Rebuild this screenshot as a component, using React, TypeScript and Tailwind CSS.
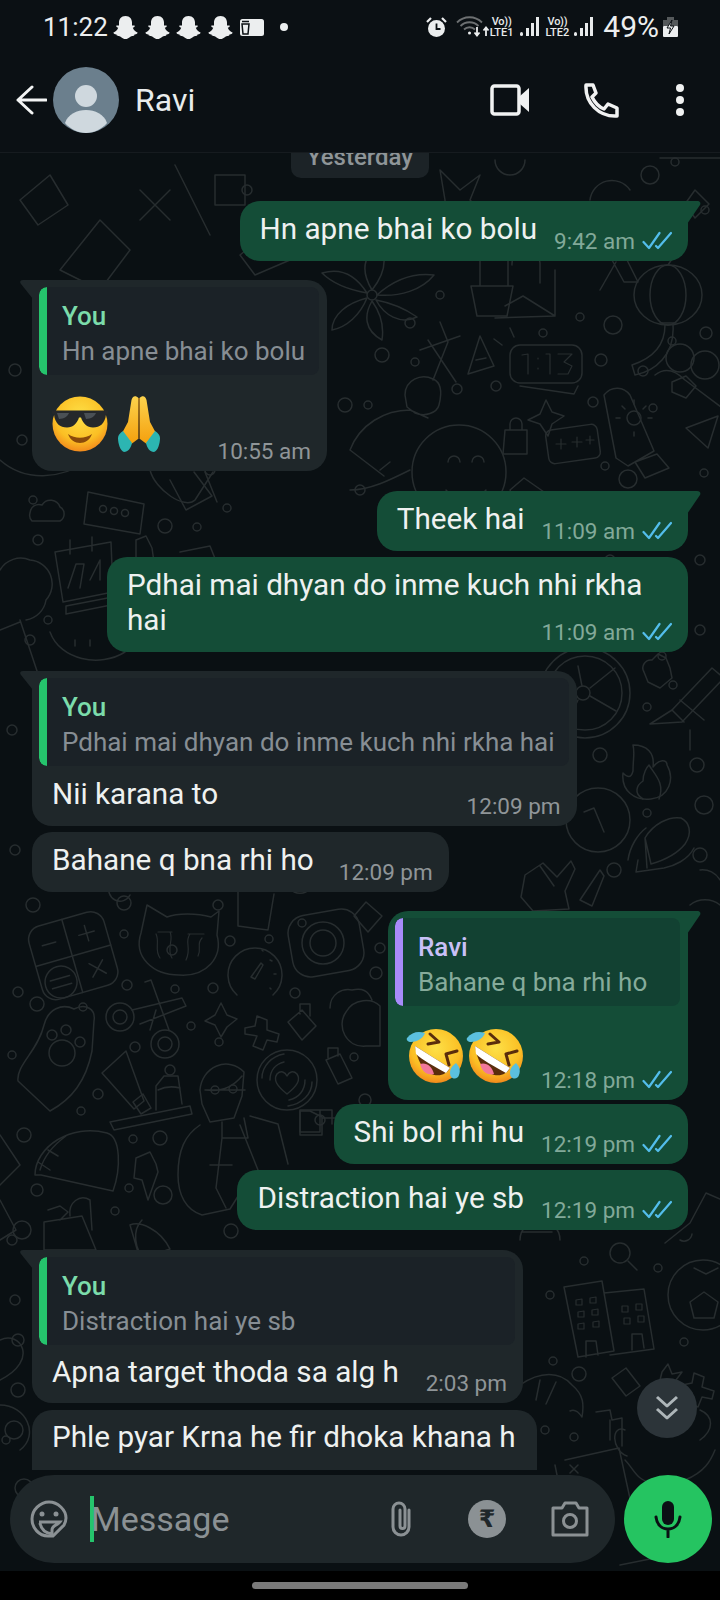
import type { ReactNode } from "react";

const dots: [number, number, number][] = [
  [33, 500, 4], [38, 540, 5], [30, 640, 5], [48, 620, 4], [165, 526, 7], [197, 527, 4], [227, 508, 4],
  [440, 295, 4], [410, 323, 5], [382, 355, 7], [415, 362, 4], [345, 405, 7], [368, 405, 4], [457, 389, 5],
  [496, 386, 5], [580, 317, 4], [613, 325, 9], [543, 333, 4], [601, 360, 6], [643, 371, 5], [706, 333, 6],
  [672, 341, 4], [653, 408, 4], [593, 402, 5], [605, 466, 4], [628, 479, 9], [704, 473, 4],
  [650, 175, 9], [675, 162, 4], [705, 210, 4], [680, 237, 4],
  [33, 905, 7], [124, 903, 7], [218, 905, 5], [124, 934, 4], [230, 941, 5], [269, 939, 4], [380, 948, 5],
  [376, 973, 6], [127, 985, 5], [175, 989, 4], [213, 988, 5], [295, 993, 5], [18, 992, 5], [37, 1004, 7],
  [83, 1007, 4], [191, 1026, 4], [135, 1047, 5], [219, 1042, 4], [170, 1070, 5], [12, 1055, 4], [98, 1094, 5],
  [81, 1111, 4], [24, 1135, 7], [133, 1139, 4], [160, 1138, 7], [129, 1188, 4], [163, 1195, 9],
  [37, 1190, 6], [115, 1211, 4], [22, 1230, 9], [231, 1231, 7], [320, 1120, 5], [354, 1057, 4], [365, 1100, 6],
  [600, 755, 7], [697, 765, 7], [704, 805, 9], [647, 813, 4], [614, 870, 7], [700, 855, 7], [662, 656, 4], [673, 685, 4], [647, 707, 4],
  [584, 1261, 4], [550, 1295, 4], [658, 1268, 4], [684, 1342, 4], [553, 1361, 4], [579, 1374, 7],
  [545, 1430, 4], [574, 1437, 4], [6, 1440, 4], [14, 1430, 9], [24, 1488, 9], [18, 1390, 7], [12, 1240, 5],
  [247, 190, 5], [40, 310, 5], [15, 370, 6], [22, 440, 5], [360, 490, 5], [700, 560, 5], [610, 560, 5], [700, 630, 5],
  [210, 470, 5], [12, 730, 5], [15, 850, 5], [18, 1340, 6], [15, 1300, 5],
];

// wallpaper doodles, placed in page coordinates
function Wallpaper() {
  return (
    <svg className="absolute inset-0 w-full h-full" viewBox="0 153 720 1418" fill="none" stroke="#272d2f" strokeWidth="1.5" strokeLinecap="round" strokeLinejoin="round">
      {dots.map(([x, y, r], i) => (
        <circle key={i} cx={x} cy={y} r={r} />
      ))}

      {/* top strip */}
      <path d="M20 200l30-25 18 30-30 20zM60 270l40-50 30 30-30 40zM140 190l30 30M140 220l30-30M175 165l35 70M215 175h30v30h-30zM240 255l30-25 20 30-35 15z" />
      <path d="M440 170l20 20 20-15-10 25 15 15-25-5-15 15 0-25zM495 160a15 15 0 0 0 30 0M590 200a22 22 0 0 1 40-10M660 158l60 0" />
      <path d="M695 190l14 14 -14 14 -10-14z" />

      {/* flower */}
      <g transform="translate(372 295)">
        <circle r="5" />
        <path d="M0-5C-12-25-8-40 8-50 16-35 12-20 0-5zM5 0C25-18 45-22 62-20 50-5 28 2 5 0zM4 5C20 8 35 15 45 22 28 30 12 20 4 5zM0 6C10 20 12 32 10 45-8 35-8 20 0 6zM-5 3C-12 20-25 32-40 35-40 20-25 8-5 3zM-5-2C-22-5-38-10-50-22-30-28-15-18-5-2z" />
      </g>
      {/* pot and cactus */}
      <path d="M471 286h42l-6 30h-30zM480 286v-30a14 14 0 0 1 28 0v30M505 306l18-10 32 20-60 2M512 265a14 14 0 0 1 28-2v20M555 270v45" />
      {/* lantern */}
      <g transform="translate(668 295)">
        <ellipse rx="34" ry="30" />
        <ellipse rx="18" ry="30" />
        <path d="M0-30l12-18M-8 28h16M-3 30c0 25-18 35-33 40l3 10c20-4 40-20 38-50" />
      </g>
      <path d="M612 260l12 22 14 0-12-24M600 290l16-28" />
      {/* translate */}
      <path d="M420 350l40-14M440 322l8 20-15 38M428 340l28 42M468 374l12-38 14 30zM476 360l10-2" />
      {/* clock */}
      <rect x="510" y="345" width="72" height="38" rx="10" />
      <path d="M520 386l54 8 4-8M502 345l-8-6M514 337l-4-9" />
      <path d="M522 355l6-1v20M538 358v1M538 368v1M546 354h4v20M558 354h14l-8 8 8 4-4 8h-10" strokeWidth="1.2" />
      {/* bearded person and smiley */}
      <path d="M405 395c0-15 16-22 28-16 10 4 8 18 6 26-2 8-14 12-24 8l-8-6zM350 450c10-26 35-40 60-40l18 8M350 450l34 26M380 470l10-8" />
      <circle cx="459" cy="472" r="47" />
      <path d="M448 462a6 6 0 0 1 12 0M472 462a6 6 0 0 1 12 0M446 490c10 14 30 14 40 0M410 470c-20 10-40 20-60 20" />
      {/* little things */}
      <path d="M546 400l6 12 12 4-12 8-4 12-8-12-12-4 12-6z" />
      <path d="M505 430h22v24h-24zM510 430v-6a6 6 0 0 1 12 0v6" />
      <rect x="547" y="427" width="52" height="34" rx="6" transform="rotate(-8 573 444)" />
      <path d="M556 444h10M561 439v10M572 442h10M577 437v10M586 440h8M590 436v8" strokeWidth="1.2" />
      <path d="M604 395c8-10 20-8 26 0l24 56-26 15-12-8zM635 462l22-8 12 14-24 10z" />
      <circle cx="634" cy="418" r="7" />
      <path d="M634 400v4M634 432v4M616 418h4M648 418h4M622 406l3 3M646 406l-3 3" />
      <path d="M686 428l32-12-10 32z" />
      <path d="M655 375c10-8 20-5 30 5l40 30M672 382l14-6 10 10-10 12-14-6z" />
      <circle cx="680" cy="358" r="14" />
      <circle cx="705" cy="365" r="14" />
      <path d="M510 490l14-12 20 14-8 16-20-4z" />

      {/* left column middle */}
      <path d="M30 513a9 9 0 0 1 12-8 10 10 0 0 1 18 2 8 8 0 0 1 0 14H32a8 8 0 0 1-2-8z" />
      <path d="M88 492l56 12-4 30-56-10z" />
      <circle cx="103" cy="509" r="3.5" /><circle cx="114" cy="511" r="3.5" /><circle cx="125" cy="513" r="3.5" />
      <path d="M55 552l56-10 2 50-50 10zM66 606l52-10-2 8-50 10zM70 540v14M92 537v14M68 588l8-24h8l-4 24M90 580l10-20v20" />
      <path d="M0 570a24 24 0 0 1 30-10 24 24 0 0 1 16 40 24 24 0 0 1-20 20M20 620l20 60M0 630l20-8" />
      <path d="M50 632c10 28 50 36 75 20l-10-20M75 640v6M90 640v6" />
      <path d="M136 540l10-4 6 12 2 14-18 6zM180 552l30-6 8 20M170 480l16 30 26-14-18-24M205 472l12 30" />
      <path d="M0 460c25 22 60 20 90 0M100 470c10-2 40-10 50-10M150 470c5 20 35 40 45 30l18-28" />

      {/* wheel, puzzle, pencil, flame, coin, corn */}
      <circle cx="585" cy="693" r="45" />
      <circle cx="585" cy="693" r="37" />
      <circle cx="583" cy="693" r="7" />
      <path d="M578 666l4 20M590 688l25-20M590 696l26 15M578 700l-12 25" />
      <path d="M644 672a8 8 0 0 1 8-12l6-6 8 4 4 10 2 10-12 10-12-6z" />
      <path d="M672 710l40-42 12 10-42 44-32 2zM672 710l12 12M680 700l24 20" />
      <path d="M633 745c14 0 22 8 20 22 6-8 14-8 14-2 8 14 2 32-16 34-16 2-30-8-28-26 4 4 8 6 10-2 0-12 2-18 0-26z" />
      <path d="M643 799c-10-6-6-14 0-18 0-8 4-14 6-16 6 10 16 18 10 34" />
      <circle cx="598" cy="820" r="32" />
      <path d="M584 812l10-4 10 24" />
      <path d="M645 838c8-14 24-22 36-20 8 4 12 14 4 26-8 10-20 16-34 20zM645 838l2 30M628 860c2-14 10-26 18-32M638 860l-2 12 28-4c10-2 24-8 30-20" />
      <path d="M525 875l18-12 14 14 14-16 4 8-10 22 4 18-36 2-12-14zM540 866l14 20" />
      <path d="M580 900l20-30 4 6-12 30z" />
      <path d="M690 730v20M700 870a20 20 0 0 1 20 10M690 905a24 24 0 0 1 30 0" />

      {/* calculator, cat, gauge, camera */}
      <g transform="rotate(-16 72 955)">
        <rect x="34" y="918" width="78" height="76" rx="14" />
        <path d="M72 918v76M34 956h78M46 938h14M84 938h16M92 930v16M86 968l14 14M100 968l-14 14" />
        <circle cx="54" cy="978" r="16" />
        <path d="M44 974h20M44 982h20" />
      </g>
      <path d="M147 905l20 12c10-4 30-4 44 0l8-6-2 24c6 22-10 42-38 40-26 0-46-18-38-42z" />
      <path d="M156 934c4 8-2 16 4 24M170 932c4 8-4 18 2 26M190 934c-6 8 2 14-4 26M202 938c-6 6 0 10-4 18M158 932h14M188 934h16" strokeWidth="1.2" />
      <circle cx="172" cy="950" r="5" />
      <path d="M237 995a27 27 0 1 1 36 0" />
      <path d="M251 977l10-14 2 2-8 14zM270 960l2 1M274 974h2M270 988l1 1M262 950l1 1" />
      <rect x="290" y="912" width="72" height="62" rx="18" transform="rotate(-10 326 943)" />
      <circle cx="323" cy="943" r="21" /><circle cx="323" cy="943" r="13" /><circle cx="302" cy="923" r="4" />
      <path d="M366 902l16 14-14 16-14-16z" />
      <path d="M330 1008c0-14 12-20 22-18 10-2 16 0 20 10M346 1012c8-14 26-14 34-6v40h-14c-20 2-30-20-20-34z" />
      <path d="M238 890v36l30 4 6-36M110 885a10 10 0 0 0 20 10M290 888a12 12 0 0 0 20 0" />

      {/* scissors */}
      <circle cx="120" cy="1017" r="14" /><circle cx="120" cy="1017" r="7" />
      <circle cx="165" cy="1044" r="14" /><circle cx="165" cy="1044" r="7" />
      <path d="M132 1010l50-12 4 8-46 18M145 982l6-2 18 50M150 1030l6-20" />
      <path d="M221 1003l6 12 10 4-10 8-6 10-6-12-10-4 10-6zM245 1028l10-2 2-10 10 4 0 10 12 4-2 8-10-2-4 10-10-4 4-10-12-2z" />
      <path d="M288 1022l14-12 14 16-14 14zM300 1014v-10h10v12M326 1060l14-6 12 24-14 6zM328 1058v-10h10v8" />
      <circle cx="287" cy="1080" r="30" />
      <path d="M287 1094c-10-8-14-14-10-20 4-4 8-2 10 2 2-4 6-6 10-2 4 6 0 12-10 20zM270 1080c0-10 6-16 14-18M305 1080c0 10-6 18-16 20M262 1078c0-12 10-22 22-24M312 1082c0 12-10 22-24 24" />
      <path d="M300 1135h22v-18l-12-6h-10zM322 1118h16" />

      {/* paw, tube, toothbrush */}
      <path d="M44 1025c4-16 18-22 30-16 12-6 22 0 20 12l-2 30c-6 30-20 48-42 60l-32-30c-2-16 20-30 26-56z" />
      <circle cx="62" cy="1053" r="13" /><circle cx="52" cy="1035" r="5" /><circle cx="66" cy="1030" r="5" /><circle cx="80" cy="1042" r="5" />
      <path d="M102 1073l24-22 18 50-10 8zM133 1102l10-8 8 14-10 6z" />
      <path d="M110 1122l80-16 2 8-78 16zM156 1110v-24l8-10h14l4 28M158 1090c8-4 14-4 22-2" />

      {/* glasses person */}
      <path d="M200 1090a26 28 0 0 1 44-18l-2 24-8 22-24 4-8-18zM206 1090c14 2 26-2 36-14M205 1090h40M222 1122v16h26l-4-20M200 1125c-15 10-22 25-22 50 0 20 8 35 24 40l28-6 10-16M222 1138l-6 50 10 20M250 1116l28 8 10 40M210 1165h22M240 1125l20 50" />
      <circle cx="215" cy="1090" r="4" /><circle cx="233" cy="1089" r="4" />
      <path d="M300 1110h20v22h-20zM320 1110h12v14" />

      {/* taco, bolt, bag, bread */}
      <path d="M35 1175c0-28 36-52 72-42 14 4 14 36 6 58l-72-16zM40 1170c4-14 12-24 26-34M38 1162l12 8M48 1150l10 6" />
      <path d="M136 1158l14-6 6 12 2 8-10 28-6-20-8-2z" />
      <path d="M44 1222l38-6 14 34-52 0zM48 1210l12-4 8 6-8 8M70 1216c-2-14 10-22 20-16l2 30" />
      <path d="M130 1225c10-4 30 4 40 24l-30 10zM142 1220c-10 10-8 30 4 40" />
      <path d="M0 1135l20 30-20 20M0 1200l16 30-16 10" />

      {/* right column bottom */}
      <circle cx="620" cy="1253" r="10" />
      <path d="M628 1261l9 9" />
      <path d="M564 1287l38-6 12 70-36 6zM604 1293l40-4 10 60-44 6M586 1357v-16h10l2 14M632 1350v-16h10l2 14" />
      <path d="M576 1300l6-1v6h-6zM590 1298l6-1v6h-6zM578 1312l6-1v6h-6zM592 1310l6-1v6h-6zM578 1324l6-1v6h-6zM593 1322l6-1v6h-6zM622 1306h6v6h-6zM636 1304h6v6h-6zM624 1318h6v6h-6zM638 1316h6v6h-6z" strokeWidth="1.2" />
      <circle cx="703" cy="1295" r="35" />
      <path d="M690 1302l14-10 14 10-4 16h-20zM694 1268l12 6 12-6" />
      <path d="M665 1243l25-20 16-30 14 6M680 1240a8 8 0 0 0 12-6M560 1240a16 16 0 0 0-40 0M522 1232h30" />
      <path d="M662 1372l6-8 4 10 10-2-6 8 6 8-10 0-4 8-6-8-8 0 6-8zM682 1385l10-2 2-10 10 4-2 10 12 4-2 8-10-2-4 10-10-4 4-10-12-2z" />
      <path d="M612 1378l14-10 14 18-14 10z" />
      <path d="M520 1385c20-14 40-14 52 0 12 10 12 20 10 32-4-6-8-8-12-6M540 1380l-4 20M556 1382l-10 22" />
      <path d="M596 1412l14-2 2 10 10-2v28M610 1420v20" />
      <path d="M625 1430c-14-6-14 20 2 26M700 1410c14 6 14 20 0 30M625 1460c10 10 10 20 30 24l30-4c20-8 26-20 30-30M660 1486l16 0" />
      <path d="M565 1460l54-12 20 92M555 1465l10 50 44 0M570 1465l8 8M578 1465l-8 8" />
      <path d="M0 1340c20-10 40 20 0 40M0 1405c26 0 40 30 20 45" />
      <path d="M520 1480l-14 14M620 1565l70-14" />
    </svg>
  );
}

function Ticks() {
  return (
    <svg width="30" height="20" viewBox="0 0 30 20" fill="none" stroke="#53bdeb" strokeWidth="2.2" strokeLinecap="round" strokeLinejoin="round" className="shrink-0">
      <path d="M1.500 11l5.500 6L17.500 2" />
      <path d="M14 15l2 2L29 2" />
    </svg>
  );
}

function Tail({ out }: { out: boolean }) {
  if (out) {
    return (
      <svg className="absolute top-0 -right-[13px]" width="14" height="24" viewBox="0 0 14 24">
        <path d="M0 0h10c3 0 4 2 3 4L0 23z" fill="#144d37" />
      </svg>
    );
  }
  return (
    <svg className="absolute top-0 -left-[12px]" width="13" height="20" viewBox="0 0 13 20">
      <path d="M13 0H3C0 0-.5 2 1 4l12 15z" fill="#1f272a" />
    </svg>
  );
}

function Time({ value, out }: { value: string; out?: boolean }) {
  return (
    <div className={`flex items-center gap-[7px] shrink-0 h-[24px] text-[22.500px] leading-[24px] ${out ? "text-[#82a999]" : "text-[#8f9598]"}`}>
      <span>{value}</span>
      {out && <Ticks />}
    </div>
  );
}

function Msg({ text, time, out, tail, className }: { text: string; time: string; out?: boolean; tail?: boolean; className: string }) {
  return (
    <div className={`relative flex items-end h-[60px] pl-[20px] pr-[16px] rounded-[20px] ${out ? "self-end gap-[17px] bg-[#144d37]" : "self-start gap-[25px] bg-[#1f272a]"} ${tail ? (out ? "rounded-tr-none" : "rounded-tl-none") : ""} ${className}`}>
      {tail && <Tail out={!!out} />}
      <span className="self-start pt-[11px] text-[29.700px] leading-[34px] text-[#eef1f0] whitespace-nowrap">{text}</span>
      <div className="mb-[8px]">
        <Time value={time} out={out} />
      </div>
    </div>
  );
}

function Quote({ name, text, out }: { name: string; text: string; out?: boolean }) {
  return (
    <div className={`flex h-[88px] rounded-[8px] overflow-hidden ${out ? "bg-[#124132]" : "bg-[#1b2227]"}`}>
      <div className={`w-[8px] shrink-0 rounded-l-[8px] ${out ? "bg-[#a78bfa]" : "bg-[#25c46c]"}`} />
      <div className="pl-[15px] pr-[14px] pt-[11px]">
        <div className={`text-[26px] leading-[36px] font-medium ${out ? "text-[#c9c0f7]" : "text-[#7bdcab]"}`}>{name}</div>
        <div className={`text-[26px] leading-[35px] whitespace-nowrap ${out ? "text-[#86ab9b]" : "text-[#878e94]"}`}>{text}</div>
      </div>
    </div>
  );
}

function ReplyBubble({ quote, out, tail, time, children, className }: { quote: { name: string; text: string }; out?: boolean; tail?: boolean; time: string; children: ReactNode; className: string }) {
  return (
    <div className={`relative flex flex-col rounded-[20px] pt-[7px] pl-[7px] pr-[8px] ${out ? "self-end bg-[#144d37]" : "self-start bg-[#1f272a]"} ${tail ? (out ? "rounded-tr-none" : "rounded-tl-none") : ""} ${className}`}>
      {tail && <Tail out={!!out} />}
      <Quote name={quote.name} text={quote.text} out={out} />
      <div className="flex flex-1 items-end justify-between pl-[13px] pr-[8px]">
        {children}
        <div className="mb-[8px]">
          <Time value={time} out={out} />
        </div>
      </div>
    </div>
  );
}

function CoolEmoji() {
  return (
    <svg width="58" height="58" viewBox="0 0 58 58">
      <defs>
        <radialGradient id="cool" cx="50%" cy="35%" r="65%">
          <stop offset="0" stopColor="#fde047" />
          <stop offset="0.7" stopColor="#fbbf24" />
          <stop offset="1" stopColor="#f28a1c" />
        </radialGradient>
      </defs>
      <circle cx="29" cy="29" r="27.500" fill="url(#cool)" />
      <path d="M1 15.500h56v3l-2 1c-1 9-6 13-13 13-6 0-10-4-12-10h-2c-2 6-6 10-12 10-7 0-12-4-13-13l-2-1z" fill="#25282b" />
      <path d="M6 18h12c-1 3-5 6-10 6zM33 18h12c-1 3-5 6-10 6z" fill="#4a5055" />
      <path d="M17 39c7 5 17 5 24 0-2 6-7 9-12 9s-10-3-12-9z" fill="#8a4a0b" />
    </svg>
  );
}

function PrayEmoji() {
  return (
    <svg width="44" height="58" viewBox="0 0 44 58">
      <defs>
        <linearGradient id="pray" x1="0" y1="0" x2="0" y2="1">
          <stop offset="0" stopColor="#fcd34d" />
          <stop offset="1" stopColor="#f59e0b" />
        </linearGradient>
      </defs>
      <path d="M21.500 3c-3-3-6-2-7 2L11 27 4 40l9 10 8-6z" fill="url(#pray)" />
      <path d="M22.500 3c3-3 6-2 7 2l3.500 22 7 13-9 10-8-6z" fill="url(#pray)" />
      <path d="M22 3v41" stroke="#c77a0a" strokeWidth="1" />
      <path d="M1 43c0-3 2-5 5-7l9 12c-1 5-4 9-8 9-4-1-6-9-6-14zM43 43c0-3-2-5-5-7l-9 12c1 5 4 9 8 9 4-1 6-9 6-14z" fill="#2cb5b2" />
    </svg>
  );
}

function RoflEmoji({ id }: { id: string }) {
  return (
    <svg width="60" height="58" viewBox="0 0 60 58">
      <defs>
        <radialGradient id={id} cx="50%" cy="35%" r="65%">
          <stop offset="0" stopColor="#fde047" />
          <stop offset="0.7" stopColor="#fbbf24" />
          <stop offset="1" stopColor="#f28a1c" />
        </radialGradient>
      </defs>
      <circle cx="30" cy="30" r="27" fill={`url(#${id})`} />
      <path d="M9 20l35 22c-6 12-30 12-35-22z" fill="#5a2d0c" />
      <path d="M9 20l35 22-4 5C28 40 16 34 10 28z" fill="#fff" />
      <path d="M14 38c6-2 12 2 14 10-6 2-12-2-14-10z" fill="#f2789a" />
      <path d="M24 8l9 8-11 2M51 25l-11 3 3 11" fill="none" stroke="#5a2d0c" strokeWidth="3" strokeLinejoin="round" strokeLinecap="round" />
      <path d="M1 12c5-6 11-7 18-5-2 6-9 9-14 9-3 0-5-2-4-4z" fill="#5bc0de" />
      <path d="M44 47c0-6 4-8 6-10 3 3 5 7 3 12-1 5-9 5-9-2z" fill="#5bc0de" />
    </svg>
  );
}

function Ghost() {
  return (
    <svg width="25" height="23" viewBox="0 0 25 23" fill="#eceeef">
      <path d="M12.500 0c4.500 0 6.500 3.300 6.500 6.500l0 3 2.500 0c.7.600.3 1.500-1.700 2.300 1 2.700 2.700 3.800 4.700 4.700.5.700-1 1.700-3 2-.3 1.300-.7 1.500-2.200 1.400-2-.2-3.200 3-6.800 3s-4.800-3.200-6.800-3c-1.500.1-1.900-.1-2.200-1.400-2-.3-3.500-1.300-3-2 2-.9 3.700-2 4.700-4.700-2-.8-2.400-1.700-1.700-2.300L6 9.500l0-3C6 3.300 8 0 12.500 0z" />
    </svg>
  );
}

function Signal() {
  return (
    <svg width="20" height="22" viewBox="0 0 20 22" fill="#e8eaeb">
      <rect x="0" y="16" width="3" height="4" rx="1.500" />
      <rect x="6" y="12" width="3" height="8" />
      <rect x="11" y="7" width="3" height="13" />
      <rect x="16" y="1" width="3" height="19" />
    </svg>
  );
}

function Volte({ label }: { label: string }) {
  return (
    <div className="flex flex-col items-center text-[#e8eaeb] font-medium text-[11px] leading-[11px]">
      <span className="tracking-tight">{"Vo))"}</span>
      <span>{label}</span>
    </div>
  );
}

function StatusBar() {
  return (
    <div className="flex items-center h-[54px] pl-[43px] text-[#eceeef]">
      <span className="text-[26px] leading-[32px] w-[64px]">11:22</span>
      <div className="flex items-center gap-[6.500px] ml-[6px]">
        <Ghost />
        <Ghost />
        <Ghost />
        <Ghost />
      </div>
      <svg className="ml-[7px]" width="24" height="17" viewBox="0 0 24 17">
        <rect width="24" height="17" rx="2.500" fill="#eceeef" />
        <path d="M2 2.500h7M2 5h7l-1 10H3z" fill="none" stroke="#0b1014" strokeWidth="1.500" />
      </svg>
      <div className="w-[8px] h-[8px] rounded-full bg-[#eceeef] ml-[16px]" />
      <div className="flex-1" />
      {/* alarm */}
      <svg width="21" height="21" viewBox="0 0 21 21" fill="none">
        <circle cx="10.500" cy="11.500" r="8.500" fill="#eceeef" />
        <path d="M10.500 6.500v5.500h4" stroke="#0b1014" strokeWidth="1.800" />
        <path d="M1 5l4-4M20 5l-4-4" stroke="#eceeef" strokeWidth="2.200" />
      </svg>
      {/* wifi */}
      <svg className="ml-[9px]" width="36" height="22" viewBox="0 0 36 22" fill="none" stroke="#6d7072" strokeWidth="1.800">
        <path d="M1 6.500c7-7 18-7 25 0M4.500 10c5-5 13-5 18 0M8 13.500c3-3 8-3 11 0" />
        <circle cx="13.500" cy="17" r="1.500" fill="#eceeef" stroke="none" />
        <path d="M21 11v8M18.500 16.500l2.500 3 2.500-3M30 20v-8M27.500 14.500l2.500-3 2.500 3" stroke="#eceeef" />
      </svg>
      <div className="ml-[-2px]">
        <Volte label="LTE1" />
      </div>
      <div className="ml-[6px]">
        <Signal />
      </div>
      <div className="ml-[6px]">
        <Volte label="LTE2" />
      </div>
      <div className="ml-[5px]">
        <Signal />
      </div>
      <span className="ml-[9px] text-[30px] leading-[32px]">49%</span>
      <svg className="ml-[4px] mr-[42px]" width="15" height="20" viewBox="0 0 15 20">
        <path d="M4 0h7v3H4z" fill="#55595b" />
        <rect y="3" width="15" height="6" fill="#55595b" />
        <rect y="9" width="15" height="11" rx="1" fill="#eceeef" />
        <path d="M9 3L4 11h3.500L6 17l5-8H7.500z" fill="#eceeef" stroke="#0b1014" strokeWidth="1" />
      </svg>
    </div>
  );
}

function Header() {
  return (
    <div className="flex items-center h-[99px] pb-[7px] pl-[16px] pr-[36px] border-b border-[#161b1f]">
      <svg width="31" height="30" viewBox="0 0 31 30" fill="none" stroke="#f3f4f4" strokeWidth="3" strokeLinecap="round" strokeLinejoin="round">
        <path d="M30 15H2M16 2L2 15l14 13" />
      </svg>
      <svg className="ml-[6px]" width="66" height="66" viewBox="0 0 66 66">
        <circle cx="33" cy="33" r="33" fill="#6b7f8d" />
        <circle cx="33" cy="29" r="11" fill="#cfd8de" />
        <path d="M12 56c3-9 12-13 21-13s18 4 21 13c-5 6-13 10-21 10s-16-4-21-10z" fill="#cfd8de" />
      </svg>
      <span className="ml-[16px] text-[32px] leading-[36px] text-[#e9ecec]">Ravi</span>
      <div className="flex-1" />
      <svg width="39" height="32" viewBox="0 0 39 32" fill="none">
        <rect x="2" y="2" width="27" height="28" rx="2.500" stroke="#f1f2f2" strokeWidth="3.500" />
        <path d="M30 12l9-8v24l-9-8z" fill="#f1f2f2" />
      </svg>
      <svg className="ml-[54px]" width="36" height="36" viewBox="0 0 36 36" fill="none" stroke="#f1f2f2" strokeWidth="3.500" strokeLinejoin="round">
        <path d="M3 3h7l3 8-4 4c3 6 7 10 12 12l4-5 9 4v8c-18 1-32-13-31-31z" />
      </svg>
      <div className="ml-[57px] flex flex-col gap-[4px]">
        <div className="w-[8px] h-[8px] rounded-full bg-[#f1f2f2]" />
        <div className="w-[8px] h-[8px] rounded-full bg-[#f1f2f2]" />
        <div className="w-[8px] h-[8px] rounded-full bg-[#f1f2f2]" />
      </div>
    </div>
  );
}

function Composer() {
  return (
    <div className="relative flex shrink-0 items-center gap-[9px] pl-[10px] pb-[8px] h-[96px]">
      <div className="flex items-center w-[605px] h-[88px] rounded-full bg-[#1f272a] pl-[20px]">
        <svg width="38" height="38" viewBox="0 0 38 38" fill="none" stroke="#8b9194" strokeWidth="3">
          <path d="M19 2c9 0 17 8 17 16 0 3-1 5-2 7L23 36h-5C9 36 2 28 2 19 2 10 10 2 19 2z" />
          <circle cx="12" cy="14" r="2.500" fill="#8b9194" stroke="none" />
          <circle cx="26" cy="14" r="2.500" fill="#8b9194" stroke="none" />
          <path d="M9 22h21c-2 3-8 3-8 8v5M10 23c1 6 5 10 12 11" />
        </svg>
        <div className="ml-[22px] w-[4px] h-[46px] bg-[#25c46c]" />
        <span className="-ml-[3px] text-[34px] leading-[40px] text-[#8b9194]">Message</span>
        <div className="flex-1" />
        <svg width="26" height="38" viewBox="0 0 26 38" fill="none" stroke="#8b9194" strokeWidth="3" strokeLinecap="round">
          <path d="M20 10v17a8 8 0 0 1-16 0V9a6 6 0 0 1 12 0v17a2.500 2.500 0 0 1-5 0V10" />
        </svg>
        <div className="ml-[53px] flex items-center justify-center w-[38px] h-[38px] rounded-full bg-[#8b9194] text-[#1f272a] text-[24px] leading-none font-bold" style={{ fontFamily: "'DejaVu Sans', sans-serif" }}>
          ₹
        </div>
        <svg className="ml-[45px] mr-[26px]" width="38" height="36" viewBox="0 0 38 36" fill="none" stroke="#8b9194" strokeWidth="3">
          <path d="M2 7h9l3-5h11l3 5h8v27H2z" strokeLinejoin="round" />
          <circle cx="19" cy="20" r="6.500" />
        </svg>
      </div>
      <div className="flex items-center justify-center w-[88px] h-[88px] rounded-full bg-[#25c461]">
        <svg width="28" height="38" viewBox="0 0 28 38" fill="none">
          <rect x="8" y="1" width="12" height="24" rx="6" fill="#0b1014" />
          <path d="M2 17c1 8 6 12 12 12s11-4 12-12M14 29v8" stroke="#0b1014" strokeWidth="3" strokeLinecap="round" />
        </svg>
      </div>
    </div>
  );
}

export default function App() {
  return (
    <div className="flex flex-col w-[720px] h-[1600px] bg-black overflow-hidden" style={{ fontFamily: "Roboto, sans-serif" }}>
      <div className="shrink-0 h-[153px] bg-[#0b1014]">
        <StatusBar />
        <Header />
      </div>

      <div className="relative flex flex-col h-[1418px] overflow-hidden bg-[#0a1013]">
        <Wallpaper />
        <div className="relative flex flex-col flex-1 min-h-0 pl-[32px] pr-[32px]">
          <div className="self-center -mt-[18px] h-[43px] w-[138px] rounded-[10px] bg-[#1c2327] flex items-center justify-center text-[#8f9598] text-[24px] leading-[30px] font-medium">
            Yesterday
          </div>

          <Msg out tail text="Hn apne bhai ko bolu" time="9:42 am" className="mt-[23px]" />

          <ReplyBubble tail quote={{ name: "You", text: "Hn apne bhai ko bolu" }} time="10:55 am" className="mt-[19px] h-[191px]">
            <div className="flex items-center gap-[8px] mb-[18px] -ml-[1px]">
              <CoolEmoji />
              <PrayEmoji />
            </div>
          </ReplyBubble>

          <Msg out tail text="Theek hai" time="11:09 am" className="mt-[20px]" />

          <div className="relative self-end flex flex-col mt-[6px] h-[95px] w-[581px] pl-[20px] pr-[16px] rounded-[20px] bg-[#144d37]">
            <p className="pt-[10px] text-[29.700px] leading-[35px] text-[#eef1f0]">
              Pdhai mai dhyan do inme kuch nhi rkha
              <br />
              hai
            </p>
            <div className="absolute right-[16px] bottom-[8px]">
              <Time value="11:09 am" out />
            </div>
          </div>

          <ReplyBubble tail quote={{ name: "You", text: "Pdhai mai dhyan do inme kuch nhi rkha hai" }} time="12:09 pm" className="mt-[19px] h-[155px]">
            <span className="self-start pt-[11px] text-[29.700px] leading-[34px] text-[#eef1f0]">Nii karana to</span>
          </ReplyBubble>

          <Msg text="Bahane q bna rhi ho" time="12:09 pm" className="mt-[6px]" />

          <ReplyBubble out tail quote={{ name: "Ravi", text: "Bahane q bna rhi ho" }} time="12:18 pm" className="mt-[19px] h-[189px] w-[300px]">
            <div className="flex items-center mb-[16px] -ml-[2px] shrink-0">
              <RoflEmoji id="rofl-a" />
              <RoflEmoji id="rofl-b" />
            </div>
          </ReplyBubble>

          <Msg out text="Shi bol rhi hu" time="12:19 pm" className="mt-[4px]" />
          <Msg out text="Distraction hai ye sb" time="12:19 pm" className="mt-[6px]" />

          <ReplyBubble tail quote={{ name: "You", text: "Distraction hai ye sb" }} time="2:03 pm" className="mt-[20px] h-[153px] w-[491px]">
            <span className="self-start pt-[10px] text-[29.700px] leading-[34px] text-[#eef1f0] whitespace-nowrap">Apna target thoda sa alg h</span>
          </ReplyBubble>

          <div className="self-start mt-[7px] h-[60px] w-[505px] pl-[20px] rounded-[20px] rounded-b-none bg-[#1f272a]">
            <p className="pt-[10px] text-[29.700px] leading-[34px] text-[#eef1f0]">Phle pyar Krna he fir dhoka khana h</p>
          </div>
        </div>

        {/* jump to latest */}
        <div className="absolute left-[637px] top-[1225px] flex items-center justify-center w-[60px] h-[60px] rounded-full bg-[#2c3439]">
          <svg width="24" height="26" viewBox="0 0 24 26" fill="none" stroke="#aeb6b9" strokeWidth="3" strokeLinejoin="round">
            <path d="M2 2l10 9 10-9M2 14l10 9 10-9" />
          </svg>
        </div>

        <Composer />
      </div>

      <div className="flex flex-1 items-center justify-center">
        <div className="w-[216px] h-[7px] rounded-full bg-[#7a7a7a]" />
      </div>
    </div>
  );
}
